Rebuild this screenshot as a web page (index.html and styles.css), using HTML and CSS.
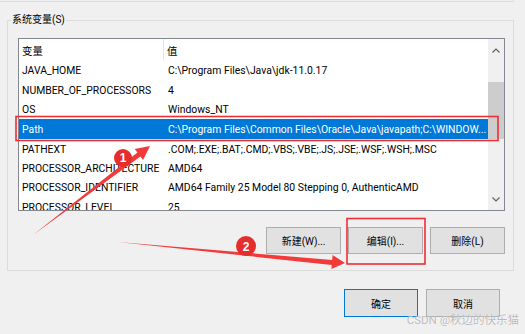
FILE: index.html
```html
<!DOCTYPE html>
<html lang="zh-CN">
<head>
  <meta charset="UTF-8">
  <title>环境变量</title>
  <link rel="stylesheet" href="styles.css">
</head>

<body>
  <div class="prev-group"></div>

  <fieldset class="group">
    <legend>系统变量(S)</legend>

    <div class="listbox">
      <div class="list">
        <div class="row head">
          <span class="c1">变量</span>
          <span class="c2">值</span>
        </div>
        <div class="row"><span class="c1">JAVA_HOME</span><span class="c2">C:\Program Files\Java\jdk-11.0.17</span></div>
        <div class="row"><span class="c1">NUMBER_OF_PROCESSORS</span><span class="c2">4</span></div>
        <div class="row"><span class="c1">OS</span><span class="c2">Windows_NT</span></div>
        <div class="row selected"><span class="c1">Path</span><span class="c2">C:\Program Files\Common Files\Oracle\Java\javapath;C:\WINDOW...</span></div>
        <div class="row"><span class="c1">PATHEXT</span><span class="c2">.COM;.EXE;.BAT;.CMD;.VBS;.VBE;.JS;.JSE;.WSF;.WSH;.MSC</span></div>
        <div class="row"><span class="c1">PROCESSOR_ARCHITECTURE</span><span class="c2">AMD64</span></div>
        <div class="row"><span class="c1">PROCESSOR_IDENTIFIER</span><span class="c2">AMD64 Family 25 Model 80 Stepping 0, AuthenticAMD</span></div>
        <div class="row"><span class="c1">PROCESSOR_LEVEL</span><span class="c2">25</span></div>
      </div>

      <!-- scrollbar -->
      <div class="scrollbar">
        <div class="sb-btn">
          <svg width="8" height="5" viewBox="0 0 8 5"><path d="M0.5 4.5 L4 1 L7.5 4.5" fill="none" stroke="#606060" stroke-width="1.2"/></svg>
        </div>
        <div class="track"><div class="thumb"></div></div>
        <div class="sb-btn">
          <svg width="8" height="5" viewBox="0 0 8 5"><path d="M0.5 0.5 L4 4 L7.5 0.5" fill="none" stroke="#606060" stroke-width="1.2"/></svg>
        </div>
      </div>
    </div>

    <div class="btn-row">
      <button class="btn">新建(W)...</button>
      <button class="btn">编辑(I)...</button>
      <button class="btn">删除(L)</button>
    </div>
  </fieldset>

  <div class="dlg-row">
    <button class="btn dlg primary">确定</button>
    <button class="btn dlg">取消</button>
  </div>

  <!-- annotations drawn over the dialog -->
  <svg class="annot" width="525" height="334" viewBox="0 0 525 334">
    <rect x="16" y="116.5" width="482" height="24" fill="none" stroke="#ee2f35" stroke-width="1.6"/>
    <rect x="347" y="218.5" width="78" height="45.5" fill="none" stroke="#ee2f35" stroke-width="1.6"/>

    <polygon points="33,235 137.4,152.5 134.7,148.9 150,146 143.1,160.1 140.4,156.5" fill="#f23a3a"/>
    <circle cx="123" cy="158" r="9" fill="#e52d2d"/>
    <text x="123" y="162" class="badge">1</text>

    <polygon points="118,242 332.2,260 332.6,255 345,263 331.4,269 331.8,265" fill="#f23a3a"/>
    <circle cx="246" cy="246" r="10" fill="#e52d2d"/>
    <text x="246" y="250.5" class="badge">2</text>
  </svg>

  <div class="watermark">CSDN @秋边的快乐猫</div>
</body>
</html>
```

FILE: styles.css
```css
body {
  margin: 0;
  width: 525px;
  height: 334px;
  overflow: hidden;
  position: relative;
  background: #f0f0f0;
  font-family: Roboto, "Noto Sans CJK SC", sans-serif;
  font-size: 10px;
  color: #000;
}

.prev-group {
  height: 1px;
  margin-right: 11px;
  border-right: 1px solid #dcdcdc;
  border-bottom: 1px solid #dcdcdc;
}

.group {
  margin: 10px 11px 0 7px;
  padding: 0 8px 16px 10px;
  border: 1px solid #dcdcdc;
  min-inline-size: 0;
}

.group legend {
  margin-left: -7px;
  padding: 0 1px;
  line-height: 16px;
  font-size: 10px;
}

.listbox {
  display: flex;
  margin-top: 10px;
  height: 173px;
  box-sizing: border-box;
  border: 1px solid #828790;
  background: #fff;
  font-size: 10.4px;
}

.list {
  flex: 1;
  overflow: hidden;
}

.row {
  display: flex;
  align-items: center;
  height: 19.4px;
  white-space: nowrap;
}

.row .c1 {
  width: 146px;
  padding-left: 3px;
  box-sizing: border-box;
  flex: none;
}

.row .c2 {
  padding-left: 3px;
}

.row.head {
  height: 22.3px;
  align-items: stretch;
}

.row.head span {
  display: flex;
  align-items: center;
}

.row.head .c1 {
  width: 145px;
  border-right: 1px solid #e5e5e5;
}

.row.selected {
  background: #0078d7;
  color: #fff;
  height: 20px;
}

.scrollbar {
  width: 16px;
  flex: none;
  display: flex;
  flex-direction: column;
  background: #f0f0f0;
}

.sb-btn {
  height: 22px;
  display: flex;
  align-items: center;
  justify-content: center;
}

.track {
  flex: 1;
  padding-top: 21px;
}

.thumb {
  height: 57px;
  background: #cdcdcd;
}

.btn {
  width: 75px;
  height: 27px;
  padding: 0;
  background: #e1e1e1;
  border: 1px solid #adadad;
  font-family: inherit;
  font-size: 10px;
  color: #000;
}

.btn-row {
  display: flex;
  justify-content: flex-end;
  gap: 7px;
  margin-top: 16px;
}

.dlg-row {
  display: flex;
  justify-content: flex-end;
  gap: 8px;
  margin-top: 18px;
  padding-right: 25px;
}

.btn.dlg {
  width: 74px;
  height: 28px;
}

.btn.primary {
  border-color: #0078d7;
}

.annot {
  position: absolute;
  left: 0;
  top: 0;
  pointer-events: none;
}

.badge {
  fill: #fff;
  font-family: "Liberation Sans", sans-serif;
  font-weight: bold;
  font-size: 12px;
  text-anchor: middle;
}

.watermark {
  position: absolute;
  right: 6px;
  bottom: 7px;
  font-size: 11.5px;
  color: rgba(130, 130, 130, 0.55);
  text-shadow: 0 0 1px #fff;
  white-space: nowrap;
}
```
